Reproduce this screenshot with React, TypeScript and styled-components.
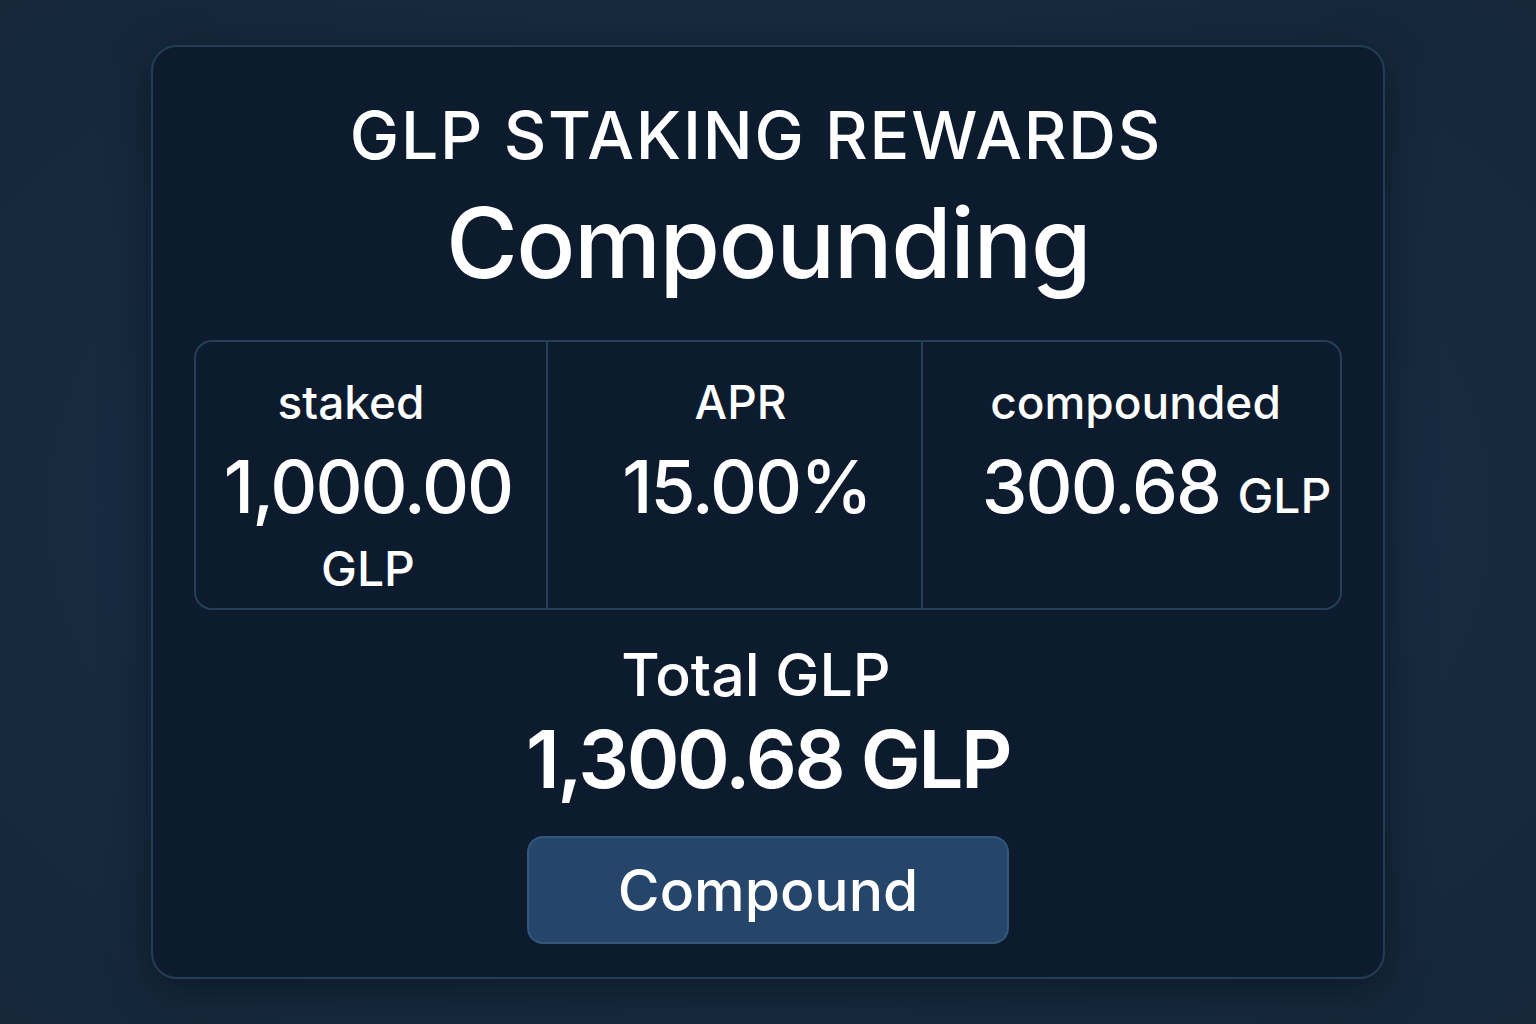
import React from "react";
import styled, { createGlobalStyle } from "styled-components";

const Global = createGlobalStyle`
  html, body { margin: 0; padding: 0; }
  body {
    width: 1536px;
    height: 1024px;
    overflow: hidden;
    background: radial-gradient(ellipse at 50% 50%, #1a2f46 0%, #172b40 60%, #152739 100%);
    font-family: Inter, "Noto Sans", sans-serif;
    color: #ffffff;
  }
  #root { height: 100%; }
`;

const Page = styled.div`
  height: 1024px;
  display: flex;
  align-items: center;
  justify-content: center;
`;

const Card = styled.section`
  box-sizing: border-box;
  width: 1234px;
  height: 934px;
  background: #0d1b2e;
  border: 2px solid #243c55;
  border-radius: 26px;
  box-shadow: 0 10px 40px rgba(5, 12, 22, 0.55);
  padding: 55px 42px 0;
  display: flex;
  flex-direction: column;
  align-items: center;
`;

const Eyebrow = styled.h2`
  margin: 0 0 0 -24px;
  font-size: 66px;
  line-height: 1;
  font-weight: 500;
  letter-spacing: 1.8px;
  text-transform: uppercase;
`;

const Headline = styled.h1`
  margin: 26px 0 0;
  font-size: 98px;
  line-height: 1;
  font-weight: 500;
  letter-spacing: -1.5px;
`;

const Stats = styled.div`
  box-sizing: border-box;
  margin-top: 48px;
  width: 1148px;
  height: 270px;
  border: 2px solid #263f58;
  border-radius: 18px;
  display: grid;
  grid-template-columns: 352px 375px 1fr;
`;

const Stat = styled.div<{ $last?: boolean }>`
  box-sizing: border-box;
  border-right: ${(p) => (p.$last ? "none" : "2px solid #263f58")};
  padding: 37px 8px 0;
  display: flex;
  flex-direction: column;
  align-items: center;
  text-align: center;
`;

const StatLabel = styled.div<{ $shift?: number }>`
  font-size: 46px;
  line-height: 1;
  font-weight: 500;
  transform: translateX(${(p) => p.$shift ?? 0}px);
`;

const StatValue = styled.div<{ $shift?: number }>`
  margin-top: 25px;
  font-size: 73px;
  line-height: 1;
  font-weight: 500;
  letter-spacing: -2px;
  transform: translateX(${(p) => p.$shift ?? 0}px);
`;

const Unit = styled.span`
  font-size: 48px;
  letter-spacing: 0;
  display: inline-block;
  margin-top: 4px;
`;

const TotalLabel = styled.div`
  margin-top: 35px;
  font-size: 59px;
  line-height: 1;
  font-weight: 500;
  transform: translateX(-12px);
`;

const TotalValue = styled.div`
  margin-top: 15px;
  font-size: 80px;
  line-height: 1;
  font-weight: 600;
  letter-spacing: -2.5px;
`;

const Button = styled.button`
  box-sizing: border-box;
  margin-top: 37px;
  width: 482px;
  height: 108px;
  background: #26456a;
  border: 2px solid #35577c;
  border-radius: 16px;
  color: #ffffff;
  font-family: Inter, "Noto Sans", sans-serif;
  font-size: 57px;
  font-weight: 500;
  line-height: 1;
  cursor: pointer;
`;

export default function App() {
  return (
    <>
      <Global />
      <Page>
        <Card>
          <Eyebrow>GLP Staking Rewards</Eyebrow>
          <Headline>Compounding</Headline>
          <Stats>
            <Stat>
              <StatLabel $shift={-20}>staked</StatLabel>
              <StatValue $shift={-3}>
                1,000.00 <Unit>GLP</Unit>
              </StatValue>
            </Stat>
            <Stat>
              <StatLabel $shift={6}>APR</StatLabel>
              <StatValue $shift={12}>15.00%</StatValue>
            </Stat>
            <Stat $last>
              <StatLabel $shift={4}>compounded</StatLabel>
              <StatValue $shift={25}>
                300.68 <Unit>GLP</Unit>
              </StatValue>
            </Stat>
          </Stats>
          <TotalLabel>Total GLP</TotalLabel>
          <TotalValue>1,300.68 GLP</TotalValue>
          <Button>Compound</Button>
        </Card>
      </Page>
    </>
  );
}
